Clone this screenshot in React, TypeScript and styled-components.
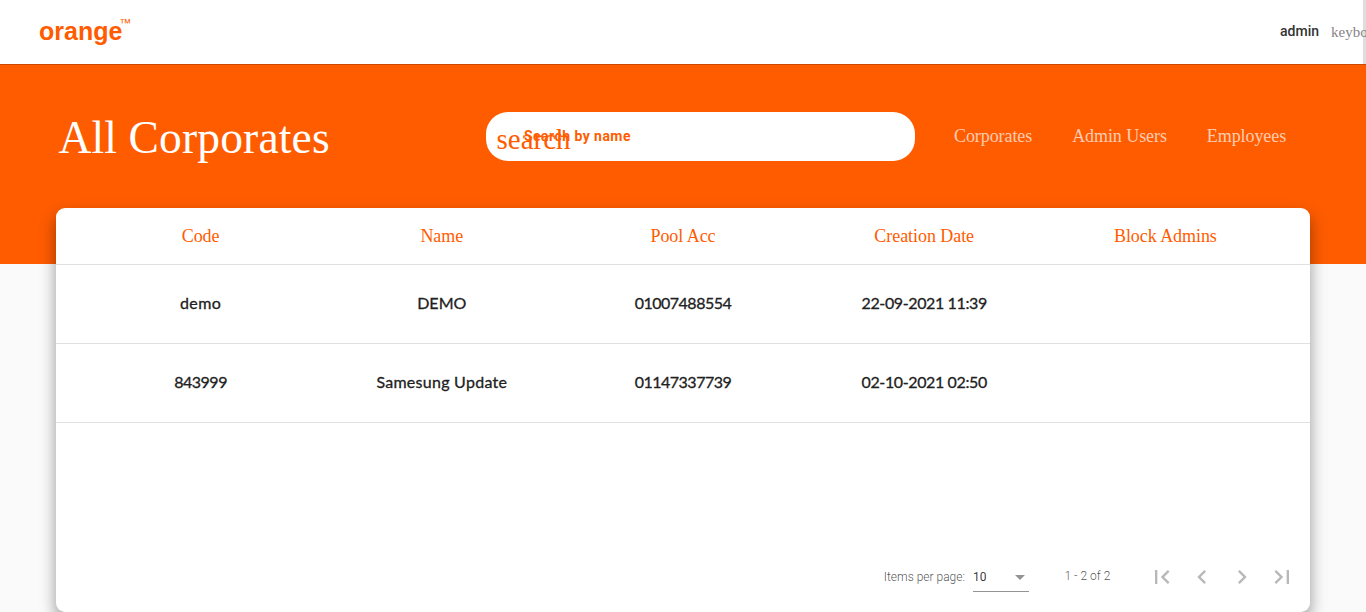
import React from "react";
import styled, { createGlobalStyle } from "styled-components";

const orange = "#ff5c00";

const GlobalStyle = createGlobalStyle`
  * { box-sizing: border-box; }
  html, body { margin: 0; height: 100%; overflow: hidden; background: #fafafa; }
  body { font-family: Roboto, "Liberation Sans", sans-serif; }
`;

const Page = styled.div`
  height: 612px;
  overflow: hidden;
`;

const TopBar = styled.header`
  position: relative;
  height: 64px;
  display: flex;
  align-items: flex-start;
  justify-content: space-between;
  background: #fff;
  overflow: hidden;
  padding-left: 39px;
`;

const Logo = styled.div`
  display: flex;
  align-items: flex-start;
  padding-top: 17px;
  color: ${orange};
  font: bold 25px/28px "Liberation Sans", Arial, sans-serif;
  letter-spacing: 0;
`;

const Trademark = styled.span`
  font: 12px/12px "Liberation Sans", Arial, sans-serif;
  margin-left: -3px;
`;

const Account = styled.div`
  display: flex;
  width: 86px;
  padding-top: 21px;
  white-space: nowrap;
`;

const UserName = styled.span`
  flex: none;
  width: 51px;
  color: #333;
  font-size: 14px;
  line-height: 20px;
  font-weight: 500;
`;

const AccountIcon = styled.span`
  color: #858585;
  font: 15px/22px "Liberation Serif", "Times New Roman", serif;
`;

const ScrollEdge = styled.div`
  position: absolute;
  top: 0;
  right: 0;
  width: 3px;
  height: 64px;
  background: rgba(0, 0, 0, 0.13);
`;

const Banner = styled.section`
  height: 200px;
  padding: 48px 0 0 58.5px;
  display: flex;
  align-items: flex-start;
  background: ${orange};
  border-top: 1px solid #c94900;
  font-family: "Liberation Serif", "Times New Roman", serif;
`;

const Title = styled.h1`
  flex: none;
  margin: 0;
  width: 427.5px;
  color: #fff;
  font-size: 45.5px;
  line-height: 50px;
  font-weight: 400;
  letter-spacing: 0.15px;
`;

const SearchField = styled.label`
  position: relative;
  flex: none;
  width: 429px;
  height: 49px;
  margin-top: -1px;
  padding-left: 38px;
  display: flex;
  align-items: center;
  background: #fff;
  border-radius: 22px;
  color: ${orange};
`;

const SearchIcon = styled.span`
  position: absolute;
  left: 10.5px;
  top: 11px;
  font-size: 29px;
  line-height: 32px;
`;

const SearchInput = styled.input`
  width: 340px;
  margin-top: -1px;
  padding: 0;
  border: 0;
  outline: 0;
  background: none;
  font: bold 14px/20px Roboto, sans-serif;
  letter-spacing: 0.45px;
  &::placeholder {
    color: ${orange};
    opacity: 1;
  }
`;

const Nav = styled.nav`
  display: flex;
  flex: none;
  gap: 40px;
  margin-left: 39px;
  padding-top: 12px;
`;

const NavLink = styled.a`
  color: rgba(255, 255, 255, 0.7);
  font-size: 18px;
  line-height: 22px;
  letter-spacing: -0.08px;
  white-space: nowrap;
`;

const Card = styled.main`
  position: relative;
  display: flex;
  flex-direction: column;
  width: 1254px;
  height: 404px;
  margin: -56px auto 0;
  background: #fff;
  border-radius: 9px;
  box-shadow: 0 8px 16px rgba(0, 0, 0, 0.4);
`;

const Row = styled.div<{ $head?: boolean }>`
  display: grid;
  grid-template-columns: repeat(5, 1fr);
  align-items: center;
  height: ${(p) => (p.$head ? 57 : 79)}px;
  padding: 0 24px ${(p) => (p.$head ? 0 : 2)}px;
  border-bottom: 1px solid #e0e0e0;
  text-align: center;
`;

const HeadCell = styled.span`
  color: ${orange};
  font: 18px/24px "Liberation Serif", "Times New Roman", serif;
  letter-spacing: -0.06px;
`;

const Cell = styled.span<{ $spacing: number }>`
  color: #212121;
  font: 400 16px/24px Lato, sans-serif;
  -webkit-text-stroke: 0.3px #212121;
  letter-spacing: ${(p) => p.$spacing}px;
`;

const Paginator = styled.footer`
  display: flex;
  align-items: center;
  justify-content: flex-end;
  height: 56px;
  margin-top: auto;
  margin-bottom: 7px;
  padding-right: 8px;
  color: rgba(0, 0, 0, 0.7);
  font-size: 12px;
  line-height: 16px;
  font-weight: 300;
`;

const PageSize = styled.div`
  display: flex;
  align-items: center;
  justify-content: space-between;
  width: 56px;
  height: 30px;
  margin: 0 35.5px 0 8px;
  padding: 0 4px 0 0;
  border-bottom: 1px solid #949494;
  color: rgba(0, 0, 0, 0.8);
  font-weight: 400;
`;

const Arrow = styled.i`
  margin-top: 1px;
  border: 5px solid transparent;
  border-top-color: #949494;
  border-bottom: 0;
`;

const Range = styled.span`
  width: 77.5px;
  margin-top: -2px;
`;

const PageButton = styled.button`
  display: flex;
  align-items: center;
  justify-content: center;
  width: 40px;
  height: 40px;
  padding: 0;
  border: 0;
  background: none;
  svg {
    width: 28px;
    height: 28px;
    fill: #b8b8b8;
  }
`;

const links = ["Corporates", "Admin Users", "Employees"];
const columns = ["Code", "Name", "Pool Acc", "Creation Date", "Block Admins"];

const rows: { text: string; spacing: number }[][] = [
  [
    { text: "demo", spacing: 0.35 },
    { text: "DEMO", spacing: 0.05 },
    { text: "01007488554", spacing: -0.5 },
    { text: "22-09-2021 11:39", spacing: -0.38 },
    { text: "", spacing: 0 },
  ],
  [
    { text: "843999", spacing: -0.5 },
    { text: "Samesung Update", spacing: 0.27 },
    { text: "01147337739", spacing: -0.5 },
    { text: "02-10-2021 02:50", spacing: -0.38 },
    { text: "", spacing: 0 },
  ],
];

const pageButtons = [
  { label: "First page", d: "M18.41 16.59L13.82 12l4.59-4.59L17 6l-6 6 6 6zM6 6h2v12H6z" },
  { label: "Previous page", d: "M15.41 7.41L14 6l-6 6 6 6 1.41-1.41L10.83 12z" },
  { label: "Next page", d: "M10 6L8.59 7.41 13.17 12l-4.58 4.59L10 18l6-6z" },
  { label: "Last page", d: "M5.59 7.41L10.18 12l-4.59 4.59L7 18l6-6-6-6zM16 6h2v12h-2z" },
];

export default function App() {
  return (
    <Page>
      <GlobalStyle />
      <TopBar>
        <Logo>
          orange<Trademark>™</Trademark>
        </Logo>
        <Account>
          <UserName>admin</UserName>
          <AccountIcon>keyboard_arrow_down</AccountIcon>
        </Account>
        <ScrollEdge />
      </TopBar>
      <Banner>
        <Title>All Corporates</Title>
        <SearchField>
          <SearchIcon>search</SearchIcon>
          <SearchInput placeholder="Search by name" />
        </SearchField>
        <Nav>
          {links.map((link) => (
            <NavLink key={link}>{link}</NavLink>
          ))}
        </Nav>
      </Banner>
      <Card>
        <Row $head>
          {columns.map((column) => (
            <HeadCell key={column}>{column}</HeadCell>
          ))}
        </Row>
        {rows.map((row, i) => (
          <Row key={i}>
            {row.map((cell, j) => (
              <Cell key={j} $spacing={cell.spacing}>
                {cell.text}
              </Cell>
            ))}
          </Row>
        ))}
        <Paginator>
          <span>Items per page:</span>
          <PageSize>
            10
            <Arrow />
          </PageSize>
          <Range>1 - 2 of 2</Range>
          {pageButtons.map((button) => (
            <PageButton key={button.label} aria-label={button.label}>
              <svg viewBox="0 0 24 24">
                <path d={button.d} />
              </svg>
            </PageButton>
          ))}
        </Paginator>
      </Card>
    </Page>
  );
}
